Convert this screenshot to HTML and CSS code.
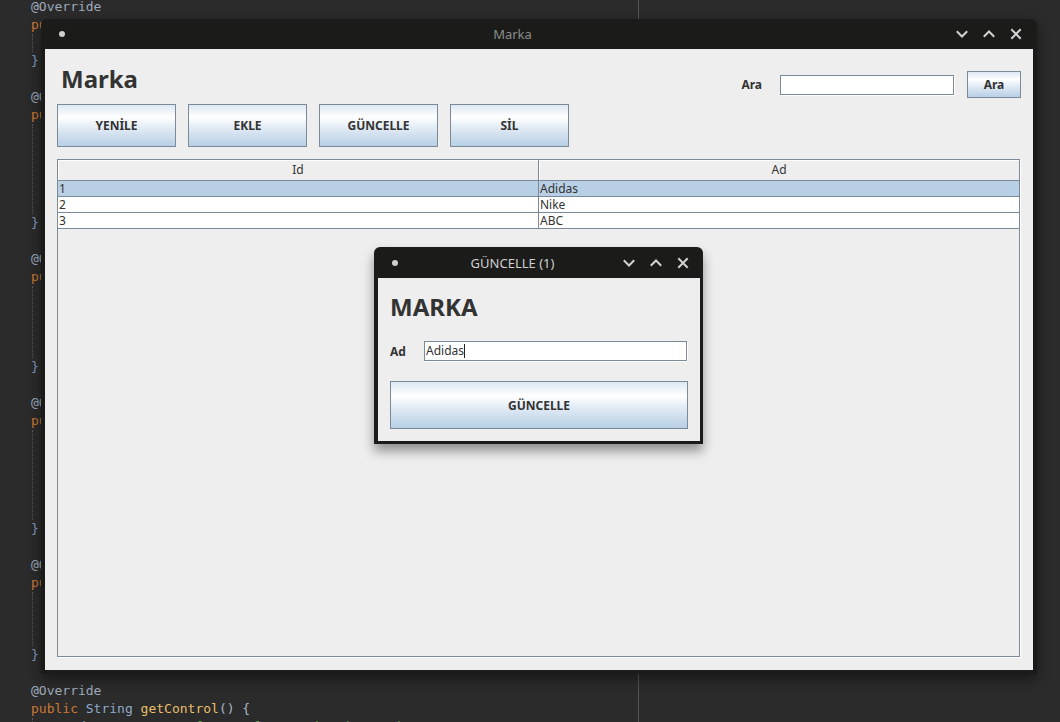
FILE: index.html
```html
<!DOCTYPE html>
<html lang="tr">
<head>
<meta charset="utf-8">
<title>Marka</title>
<link rel="stylesheet" href="styles.css">
</head>
<body>
<div class="editor">
  <div class="code">
    <div class="ln"><span class="an">@Override</span></div>
    <div class="ln"><span class="kw">pu</span></div>
    <div class="blk"><div class="ln"> </div></div>
    <div class="ln"><span class="br">}</span></div>
    <div class="ln"> </div>
    <div class="ln"><span class="an">@O</span></div>
    <div class="ln"><span class="kw">pu</span></div>
    <div class="blk">
      <div class="ln"> </div>
      <div class="ln"> </div>
      <div class="ln"> </div>
      <div class="ln"> </div>
      <div class="ln"> </div>
    </div>
    <div class="ln"><span class="br">}</span></div>
    <div class="ln"> </div>
    <div class="ln"><span class="an">@O</span></div>
    <div class="ln"><span class="kw">pu</span></div>
    <div class="blk">
      <div class="ln"> </div>
      <div class="ln"> </div>
      <div class="ln"> </div>
      <div class="ln"> </div>
    </div>
    <div class="ln"><span class="br">}</span></div>
    <div class="ln"> </div>
    <div class="ln"><span class="an">@O</span></div>
    <div class="ln"><span class="kw">pu</span></div>
    <div class="blk">
      <div class="ln"> </div>
      <div class="ln"> </div>
      <div class="ln"> </div>
      <div class="ln"> </div>
      <div class="ln"> </div>
    </div>
    <div class="ln"><span class="br">}</span></div>
    <div class="ln"> </div>
    <div class="ln"><span class="an">@O</span></div>
    <div class="ln"><span class="kw">pu</span></div>
    <div class="blk">
      <div class="ln"> </div>
      <div class="ln"> </div>
      <div class="ln"> </div>
    </div>
    <div class="ln"><span class="br">}</span></div>
    <div class="ln"> </div>
    <div class="ln"><span class="an">@Override</span></div>
    <div class="ln"><span class="kw">public</span> <span class="ty">String</span> <span class="fn">getControl</span><span class="pn">() {</span></div>
    <div class="blk">
      <div class="ln">   <span class="ty">String</span> <span class="pn">query =</span> <span class="st">"select * from marka where ad = ?"</span><span class="pn">;</span></div>
    </div>
  </div>
  <div class="rest"></div>
</div>

<div class="window main-win">
  <div class="titlebar">
    <span class="tb-dot"></span>
    <span class="tb-title">Marka</span>
    <span class="tb-icons">
      <svg class="tb-ic" viewBox="0 0 12 12"><polyline points="1.5,4 6,8.5 10.5,4"/></svg>
      <svg class="tb-ic" viewBox="0 0 12 12"><polyline points="1.5,8 6,3.5 10.5,8"/></svg>
      <svg class="tb-ic" viewBox="0 0 12 12"><path d="M2 2 L10 10 M10 2 L2 10"/></svg>
    </span>
  </div>
  <div class="win-body main-body">
    <div class="top-row">
      <h1 class="heading heading-main">Marka</h1>
      <div class="search">
        <span class="lbl">Ara</span>
        <div class="field search-field"></div>
        <button class="btn btn-search">Ara</button>
      </div>
    </div>
    <div class="actions">
      <button class="btn btn-act">YENİLE</button>
      <button class="btn btn-act">EKLE</button>
      <button class="btn btn-act">GÜNCELLE</button>
      <button class="btn btn-act">SİL</button>
    </div>
    <div class="table">
      <div class="thead">
        <div class="th">Id</div>
        <div class="th">Ad</div>
      </div>
      <div class="tr sel"><div class="td">1</div><div class="td">Adidas</div></div>
      <div class="tr"><div class="td">2</div><div class="td">Nike</div></div>
      <div class="tr"><div class="td">3</div><div class="td">ABC</div></div>
    </div>
  </div>
</div>

<div class="window dialog">
  <div class="titlebar dlg-titlebar">
    <span class="tb-dot"></span>
    <span class="tb-title dlg-title">GÜNCELLE (1)</span>
    <span class="tb-icons dlg-icons">
      <svg class="tb-ic" viewBox="0 0 12 12"><polyline points="1.5,4 6,8.5 10.5,4"/></svg>
      <svg class="tb-ic" viewBox="0 0 12 12"><polyline points="1.5,8 6,3.5 10.5,8"/></svg>
      <svg class="tb-ic" viewBox="0 0 12 12"><path d="M2 2 L10 10 M10 2 L2 10"/></svg>
    </span>
  </div>
  <div class="win-body dlg-body">
    <h2 class="heading heading-dlg">MARKA</h2>
    <div class="form-row">
      <span class="lbl form-lbl">Ad</span>
      <div class="field dlg-field"><span class="field-text">Adidas</span><span class="caret"></span></div>
    </div>
    <button class="btn btn-wide">GÜNCELLE</button>
  </div>
</div>
</body>
</html>
```

FILE: styles.css
```css
html, body {
  margin: 0;
  padding: 0;
}
body {
  width: 1060px;
  height: 722px;
  overflow: hidden;
  background: #2b2b2b;
  font-family: "Noto Sans", "Open Sans", sans-serif;
  color: #333333;
  position: relative;
}

/* ---------- background editor ---------- */
.editor {
  display: flex;
  height: 722px;
}
.code {
  width: 639px;
  box-sizing: border-box;
  padding-left: 31px;
  margin-top: -2px;
  font-family: "DejaVu Sans Mono", "Liberation Mono", monospace;
  font-size: 13px;
  color: #a9b7c6;
  border-right: 1px solid #555555;
  height: 724px;
}
.ln {
  height: 18px;
  line-height: 18px;
  white-space: pre;
}
.blk {
  margin-left: 1px;
  border-left: 1px dotted #5a5a5a;
}
.an { color: #9ea9ba; }
.kw { color: #cc7832; }
.ty { color: #8fa9c9; }
.fn { color: #e8bf6a; }
.pn { color: #a9b7c6; }
.st { color: #6a9a4f; }
.br { color: #7f9cc8; }
.rest { flex: 1; }

/* ---------- windows ---------- */
.window {
  position: absolute;
  background: #1b1c1a;
  border-radius: 6px 6px 0 0;
  display: flex;
  flex-direction: column;
}
.main-win {
  left: 41px;
  top: 19px;
  width: 996px;
  height: 655px;
  box-shadow: 0 5px 14px rgba(0, 0, 0, 0.45);
}
.dialog {
  left: 374px;
  top: 247px;
  width: 329px;
  height: 197px;
  box-shadow: 0 7px 12px rgba(0, 0, 0, 0.4);
}

.titlebar {
  height: 30px;
  flex: none;
  display: flex;
  align-items: center;
  padding-right: 15px;
}
.dlg-titlebar {
  height: 31px;
  padding-right: 14px;
}
.tb-dot {
  width: 6px;
  height: 6px;
  border-radius: 50%;
  background: #cfcfcf;
  margin-left: 18px;
  flex: none;
}
.tb-title {
  flex: 1;
  text-align: center;
  font-size: 13px;
  color: #8a8a8a;
  padding-left: 4px;
}
.dlg-title {
  color: #cfcfcf;
}
.tb-icons {
  display: flex;
  gap: 15px;
  align-items: center;
}
.tb-ic {
  width: 12px;
  height: 12px;
  fill: none;
  stroke: #d2d2d2;
  stroke-width: 2;
  stroke-linecap: square;
}

.win-body {
  flex: 1;
  background: #eeeeee;
  display: flex;
  flex-direction: column;
}
.main-body {
  margin: 0 4px 4px 4px;
  padding: 0 13px 13px 12px;
}
.dlg-body {
  margin: 0 3px 3px 4px;
  padding: 13px 12px 12px 12px;
}

/* ---------- header ---------- */
.top-row {
  height: 55px;
  flex: none;
  display: flex;
  justify-content: space-between;
  align-items: flex-start;
}
.heading {
  margin: 0;
  font-size: 24px;
  font-weight: 700;
  line-height: 32px;
  color: #333333;
}
.heading-main {
  margin-top: 14px;
  margin-left: 4px;
}
.search {
  margin-top: 22px;
  margin-right: -1px;
  display: flex;
  align-items: center;
}
.lbl {
  font-size: 12px;
  font-weight: 700;
  color: #333333;
}
.search .lbl {
  margin-right: 18px;
}
.field {
  background: #ffffff;
  border: 1px solid #7a8a99;
  box-shadow: 1px 1px 0 #ffffff;
  box-sizing: border-box;
  height: 20px;
}
.search-field {
  width: 174px;
  margin-right: 13px;
}

/* ---------- buttons ---------- */
.btn {
  font-family: "Noto Sans", "Open Sans", sans-serif;
  font-size: 12px;
  font-weight: 700;
  color: #333333;
  border: 1px solid #7a8a99;
  background: linear-gradient(to bottom, #dde8f3 0%, #ffffff 30%, #dde8f3 60%, #b8cfe5 100%);
  box-sizing: border-box;
  padding: 0;
  margin: 0;
}
.btn-search {
  width: 54px;
  height: 27px;
}
.actions {
  display: flex;
  gap: 12px;
  flex: none;
}
.btn-act {
  width: 119px;
  height: 43px;
}
.btn-wide {
  width: 298px;
  height: 48px;
  margin-top: 20px;
}

/* ---------- table ---------- */
.table {
  margin-top: 12px;
  flex: 1;
  border: 1px solid #7a8a99;
  box-shadow: 1px 1px 0 #ffffff;
  background: #eeeeee;
  font-size: 12px;
}
.thead {
  display: grid;
  grid-template-columns: 481px 1fr;
  height: 21px;
}
.th {
  box-sizing: border-box;
  text-align: center;
  line-height: 19px;
  border-bottom: 1px solid #7a8a99;
  box-shadow: inset 1px 1px 0 #ffffff;
  color: #333333;
}
.th:first-child {
  border-right: 1px solid #7a8a99;
}
.tr {
  display: grid;
  grid-template-columns: 481px 1fr;
  height: 16px;
  box-sizing: border-box;
  border-bottom: 1px solid #7a8a99;
  background: #ffffff;
}
.tr.sel {
  background: #b8cfe5;
}
.td {
  padding-left: 1px;
  line-height: 15px;
  color: #333333;
  white-space: nowrap;
}
.td:first-child {
  border-right: 1px solid #7a8a99;
}

/* ---------- dialog ---------- */
.form-row {
  display: flex;
  align-items: center;
  margin-top: 18px;
}
.form-lbl {
  width: 34px;
  flex: none;
}
.dlg-field {
  flex: 1;
  margin-right: 1px;
  display: flex;
  align-items: center;
  padding-left: 1px;
}
.field-text {
  font-size: 12px;
  line-height: 18px;
  color: #333333;
}
.caret {
  width: 1px;
  height: 14px;
  background: #222222;
}
```
